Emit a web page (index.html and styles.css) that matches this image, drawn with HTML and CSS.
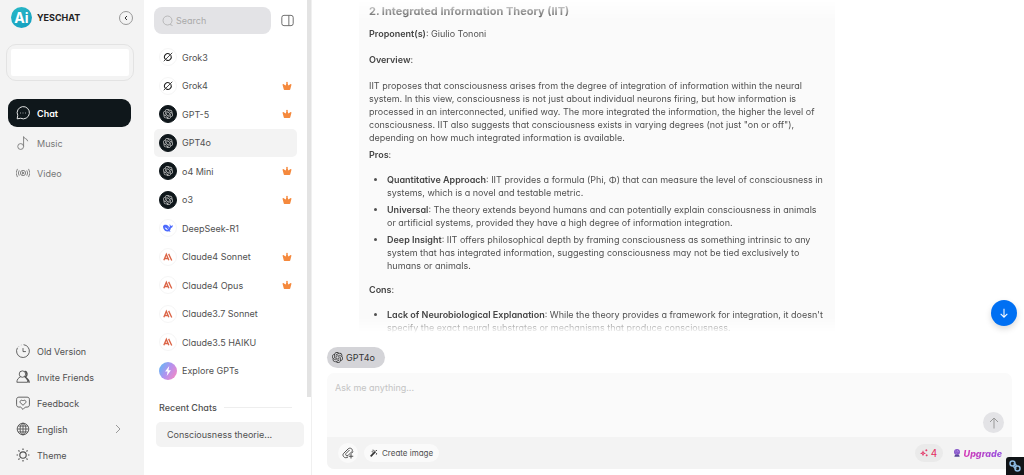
FILE: index.html
```html
<!DOCTYPE html>
<html lang="en">
<head>
  <meta charset="UTF-8" />
  <meta name="viewport" content="width=device-width, initial-scale=1.0"/>
  <title>YesChat</title>
  <link rel="stylesheet" href="styles.css">
</head>
<body>

  <!-- shared icons -->
  <svg class="sprite" aria-hidden="true">
    <symbol id="openai" viewBox="0 0 24 24"><path fill="currentColor" d="M22.2819 9.8211a5.9847 5.9847 0 0 0-.5157-4.9108 6.0462 6.0462 0 0 0-6.5098-2.9A6.0651 6.0651 0 0 0 4.9807 4.1818a5.9847 5.9847 0 0 0-3.9977 2.9 6.0462 6.0462 0 0 0 .7427 7.0966 5.98 5.98 0 0 0 .511 4.9107 6.051 6.051 0 0 0 6.5146 2.9001A5.9847 5.9847 0 0 0 13.2599 24a6.0557 6.0557 0 0 0 5.7718-4.2058 5.9894 5.9894 0 0 0 3.9977-2.9001 6.0557 6.0557 0 0 0-.7475-7.0729zm-9.022 12.6081a4.4755 4.4755 0 0 1-2.8764-1.0408l.1419-.0804 4.7783-2.7582a.7948.7948 0 0 0 .3927-.6813v-6.7369l2.02 1.1686a.071.071 0 0 1 .038.052v5.5826a4.504 4.504 0 0 1-4.4945 4.4944zm-9.6607-4.1254a4.4708 4.4708 0 0 1-.5346-3.0137l.142.0852 4.783 2.7582a.7712.7712 0 0 0 .7806 0l5.8428-3.3685v2.3324a.0804.0804 0 0 1-.0332.0615L9.74 19.9502a4.4992 4.4992 0 0 1-6.1408-1.6464zM2.3408 7.8956a4.485 4.485 0 0 1 2.3655-1.9728V11.6a.7664.7664 0 0 0 .3879.6765l5.8144 3.3543-2.0201 1.1685a.0757.0757 0 0 1-.071 0l-4.8303-2.7865A4.504 4.504 0 0 1 2.3408 7.872zm16.5963 3.8558L13.1038 8.364 15.1192 7.2a.0757.0757 0 0 1 .071 0l4.8303 2.7913a4.4944 4.4944 0 0 1-.6765 8.1042v-5.6772a.79.79 0 0 0-.407-.667zm2.0107-3.0231l-.142-.0852-4.7735-2.7818a.7759.7759 0 0 0-.7854 0L9.409 9.2297V6.8974a.0662.0662 0 0 1 .0284-.0615l4.8303-2.7866a4.4992 4.4992 0 0 1 6.6802 4.66zM8.3065 12.863l-2.02-1.1638a.0804.0804 0 0 1-.038-.0567V6.0742a4.4992 4.4992 0 0 1 7.3757-3.4537l-.142.0805L8.704 5.459a.7948.7948 0 0 0-.3927.6813zm1.0976-2.3654l2.602-1.4998 2.6069 1.4998v2.9994l-2.5974 1.4997-2.6067-1.4997Z"/></symbol>
    <symbol id="grok" viewBox="0 0 24 24"><g fill="none" stroke="#222" stroke-width="2.5" stroke-linecap="round"><path d="M16.5 5.5A8 8 0 0 0 5.5 17"/><path d="M19 8.500A8 8 0 0 1 8 19.200"/><path d="M2.500 21.500 21.500 2.500" stroke-width="2"/></g></symbol>
    <symbol id="claude" viewBox="0 0 24 24"><g fill="none" stroke="#dc6547" stroke-width="3.200"><path d="M2 20 8 5.500 14 20M4.500 15.500h7M13.500 4.500l7.500 16"/></g></symbol>
    <symbol id="deepseek" viewBox="0 0 24 24"><path fill="#4d6bfe" d="M0 8C.5 4 6 3 9.500 5c3 1.200 4.500 4.500 6.500 5.500 1-1.500.3-5-.5-7.500 1.500.2 2.500 1.500 3.300 4 1.500 0 3.500-1 4.700-2.500.5 4.500-2.500 7-4.500 7.500-.3 2.500-1.500 4.500-3 6l2.500 2c-2.500.8-4.500.5-5.500-.3C6 22.200 0 16 0 8z"/><path fill="#fff" d="M4.500 11c3.500 0 5.500 2.500 7.500 5.500-3.500 0-7-2-7.500-5.500zM11.500 10.500c1.500 0 2.500 1 2.800 2.500-1.500 0-2.600-1-2.800-2.500z"/></symbol>
    <symbol id="crown" viewBox="0 0 24 24"><path fill="#f5893d" d="M12 1.500c1.800 0 2.600 2 1.400 3.400L15 11l5-3.500c1-1 3-.2 2.700 1.200L20 19c-.2 1.500-.8 2.500-2 2.500H6c-1.200 0-1.800-1-2-2.500L1.300 8.700C1 7.300 3 6.500 4 7.500L9 11l1.600-6.100C9.400 3.500 10.200 1.500 12 1.500z"/></symbol>
  </svg>

  <div class="app">
    <aside class="sidebar">
      <div class="brand">
        <span class="logo">Ai</span>
        <span class="brand-name">YESCHAT</span>
        <button class="collapse" aria-label="Collapse menu">
          <svg class="icon-tiny" viewBox="0 0 10 10"><path d="M6 3 4 5 6 7" fill="none" stroke="#333"/></svg>
        </button>
      </div>

      <div class="account"><div class="account-inner"></div></div>

      <nav class="main-nav">
        <a href="#" class="nav-item active">
          <svg class="icon" viewBox="0 0 24 24"><path d="M2 22l1-6a10.500 10.500 0 1 1 5 5z"/><path d="M7 12h1M11.500 12h1M16 12h1" stroke-width="2"/></svg>
          Chat
        </a>
        <a href="#" class="nav-item">
          <svg class="icon" viewBox="0 0 24 24"><circle cx="8" cy="18" r="5"/><path d="M13 18V1c0 4 7 3 7 8"/></svg>
          Music
        </a>
        <a href="#" class="nav-item">
          <svg class="icon" viewBox="0 0 24 24"><circle cx="12" cy="12" r="4.500"/><path d="M11 10v4l3-2zM5.500 7.500a8 8 0 0 0 0 9M18.500 7.500a8 8 0 0 1 0 9M2.500 5a12 12 0 0 0 0 14M21.500 5a12 12 0 0 1 0 14"/></svg>
          Video
        </a>
      </nav>

      <nav class="sub-nav">
        <a href="#" class="nav-item">
          <svg class="icon" viewBox="0 0 24 24"><path d="M13 1.200A11 11 0 1 1 2.500 6.500"/><path d="M12 7v6h5M5 4l.5-.5M8.500 2l.5-.2"/></svg>
          Old Version
        </a>
        <a href="#" class="nav-item">
          <svg class="icon" viewBox="0 0 24 24"><circle cx="11" cy="7" r="5.500"/><path d="M1.500 21c0-5 3-8 6-9M15 12c3 1 5 4 5 9H1.500"/><path d="M15 2c5 1 5 8 1 10l5 5c1 1 1.500 3 1.500 5" stroke-width="2.500"/></svg>
          Invite Friends
        </a>
        <a href="#" class="nav-item">
          <svg class="icon" viewBox="0 0 24 24"><path d="M5 2h14c2.500 0 4 1.500 4 4v9c0 2.500-1.500 4-4 4h-3l-4 4-4-4H5c-2.500 0-4-1.500-4-4V6c0-2.500 1.500-4 4-4z"/><path d="M12 16 7.500 11.500c-2-3 2-6 4.500-3 2.500-3 6.500 0 4.500 3z"/></svg>
          Feedback
        </a>
        <a href="#" class="nav-item">
          <svg class="icon" viewBox="0 0 24 24"><circle cx="12" cy="12" r="10"/><ellipse cx="12" cy="12" rx="5" ry="10"/><path d="M2 12h20M12 2v20M3.500 7h17M3.500 17h17"/></svg>
          English
          <svg class="chevron" viewBox="0 0 10 10"><path d="M3 1 7 5 3 9" fill="none" stroke="#999"/></svg>
        </a>
        <a href="#" class="nav-item">
          <svg class="icon" viewBox="0 0 24 24"><circle cx="12" cy="12" r="5.500" stroke-width="2"/><path d="M12 1v2.500M12 20.500V23M1 12h2.500M20.500 12H23M4.200 4.200 6 6M18 18l1.800 1.800M19.800 4.200 18 6M6 18l-1.800 1.800" stroke-width="2"/></svg>
          Theme
        </a>
      </nav>
    </aside>

    <section class="models">
      <div class="model-scroll">
        <div class="search-row">
          <label class="search">
            <svg class="icon-small" viewBox="0 0 24 24"><circle cx="11" cy="11" r="9"/><path d="M16 19l5 2"/></svg>
            <input type="search" placeholder="Search" aria-label="Search">
          </label>
          <button class="panel-btn" aria-label="Toggle panel">
            <svg class="icon-panel" viewBox="0 0 24 24"><rect x="1.500" y="2.500" width="21" height="19" rx="4"/><path d="M14.500 3v18"/></svg>
          </button>
        </div>

        <div class="model-list">
          <a href="#" class="model"><span class="avatar"><svg><use href="#grok"/></svg></span>Grok3</a>
          <a href="#" class="model"><span class="avatar"><svg><use href="#grok"/></svg></span>Grok4<svg class="crown"><use href="#crown"/></svg></a>
          <a href="#" class="model"><span class="avatar dark"><svg><use href="#openai"/></svg></span>GPT-5<svg class="crown"><use href="#crown"/></svg></a>
          <a href="#" class="model selected"><span class="avatar dark"><svg><use href="#openai"/></svg></span>GPT4o</a>
          <a href="#" class="model"><span class="avatar dark"><svg><use href="#openai"/></svg></span>o4 Mini<svg class="crown"><use href="#crown"/></svg></a>
          <a href="#" class="model"><span class="avatar dark"><svg><use href="#openai"/></svg></span>o3<svg class="crown"><use href="#crown"/></svg></a>
          <a href="#" class="model"><span class="avatar"><svg><use href="#deepseek"/></svg></span>DeepSeek-R1</a>
          <a href="#" class="model"><span class="avatar"><svg><use href="#claude"/></svg></span>Claude4 Sonnet<svg class="crown"><use href="#crown"/></svg></a>
          <a href="#" class="model"><span class="avatar"><svg><use href="#claude"/></svg></span>Claude4 Opus<svg class="crown"><use href="#crown"/></svg></a>
          <a href="#" class="model"><span class="avatar"><svg><use href="#claude"/></svg></span>Claude3.7 Sonnet</a>
          <a href="#" class="model"><span class="avatar"><svg><use href="#claude"/></svg></span>Claude3.5 HAIKU</a>
          <a href="#" class="model"><span class="avatar explore"><svg viewBox="0 0 24 24"><path fill="#fff" d="M15 0 5 13h6L9 24l10-14h-6z"/></svg></span>Explore GPTs</a>
        </div>
      </div>

      <div class="recent">
        <h2>Recent Chats</h2>
        <a href="#" class="recent-item">Consciousness theorie...</a>
      </div>
    </section>

    <main class="chat">
      <div class="messages">
        <article class="message">
          <h3>2. Integrated Information Theory (IIT)</h3>
          <p><strong>Proponent(s)</strong>: Giulio Tononi</p>
          <p><strong>Overview</strong>:</p>
          <p class="overview">IIT proposes that consciousness arises from the degree of integration of information within the neural system. In this view, consciousness is not just about individual neurons firing, but how information is processed in an interconnected, unified way. The more integrated the information, the higher the level of consciousness. IIT also suggests that consciousness exists in varying degrees (not just "on or off"), depending on how much integrated information is available.</p>
          <p class="list-title"><strong>Pros</strong>:</p>
          <ul>
            <li><strong>Quantitative Approach</strong>: IIT provides a formula (Phi, Φ) that can measure the level of consciousness in systems, which is a novel and testable metric.</li>
            <li><strong>Universal</strong>: The theory extends beyond humans and can potentially explain consciousness in animals or artificial systems, provided they have a high degree of information integration.</li>
            <li><strong>Deep Insight</strong>: IIT offers philosophical depth by framing consciousness as something intrinsic to any system that has integrated information, suggesting consciousness may not be tied exclusively to humans or animals.</li>
          </ul>
          <p class="list-title"><strong>Cons</strong>:</p>
          <ul>
            <li><strong>Lack of Neurobiological Explanation</strong>: While the theory provides a framework for integration, it doesn't specify the exact neural substrates or mechanisms that produce consciousness.</li>
          </ul>
        </article>
      </div>

      <button class="scroll-down" aria-label="Scroll to bottom">
        <svg viewBox="0 0 24 24"><path d="M12 2v20M4 14l8 8 8-8" stroke-width="2.500"/></svg>
      </button>

      <div class="composer">
        <button class="model-chip"><svg><use href="#openai"/></svg>GPT4o</button>
        <div class="input-box">
          <div class="input-area">
            <textarea placeholder="Ask me anything..." aria-label="Message"></textarea>
            <button class="send" aria-label="Send">
              <svg class="icon-small" viewBox="0 0 24 24"><path d="M12 23V2M4 10l8-8 8 8" stroke-width="2"/></svg>
            </button>
          </div>
          <div class="toolbar">
            <button class="attach" aria-label="Attach file">
              <svg class="icon-small" viewBox="0 0 24 24"><path d="M12 20c-3 2-7 2-9-1s-1-5 1-7l8-8c4-4 11 0 8 5l-8 8c-3 2-6-1-4-4l7-7M4 12l6-6M22 9l-3 4M18 14v9M13.500 18.500h9" stroke-width="2"/></svg>
            </button>
            <button class="create">
              <svg viewBox="0 0 24 24"><path d="M2 22 16 8" stroke="#333" stroke-width="5"/><path d="M17 7l4-4M9 2l1 5M5 8l4 1M20 12l-1 5M14 3l1 2" stroke="#333" stroke-width="2.500"/></svg>
              Create image
            </button>
            <button class="credits">
              <svg viewBox="0 0 24 24"><path d="M9 4l2.500 6.500L18 13l-6.500 2.500L9 22l-2.500-6.500L0 13l6.500-2.500z" fill="#e22f62"/><circle cx="9" cy="13" r="1.500" fill="#eee"/><path d="M19 1v6M16 4h6M20 16v6M17 19h6" stroke="#e22f62" stroke-width="2.500"/></svg>
              4
            </button>
            <a href="#" class="upgrade">
              <svg viewBox="0 0 24 24"><circle cx="12" cy="9" r="9" fill="#8657c9"/><path d="M6 17h12l2 6H4z" fill="#594795"/><path d="M7 5l2 3M13 3v5M17 7l-2 3M8 12l3 1" stroke="#c8a3f1" stroke-width="2"/></svg>
              <span>Upgrade</span>
            </a>
          </div>
        </div>
      </div>
    </main>
  </div>

  <button class="link-badge" aria-label="Copy link">
    <svg viewBox="0 0 24 24"><g fill="none" stroke="#8bb8e0" stroke-width="3"><circle cx="7" cy="7" r="5"/><circle cx="17" cy="17" r="5"/><path d="M9 8c4-1 6 2 5 4M15 16c-4 1-6-2-5-4"/></g></svg>
  </button>

</body>
</html>
```
FILE: styles.css
```css
* {
  box-sizing: border-box;
}

body {
  margin: 0;
  font-family: 'Inter', 'Liberation Sans', sans-serif;
  font-feature-settings: "cv11";
  font-size: 9px;
  line-height: 13px;
  color: #505050;
  background-color: #fff;
}

button, input, textarea {
  font: inherit;
  font-feature-settings: inherit;
  color: inherit;
  border: none;
  padding: 0;
  background: none;
}

button {
  cursor: pointer;
  display: flex;
  align-items: center;
  justify-content: center;
}

a {
  color: inherit;
  text-decoration: none;
}

svg {
  flex-shrink: 0;
}

.sprite {
  display: none;
}

.app {
  display: flex;
  height: 100vh;
}

.icon, .icon-small, .icon-panel {
  width: 14px;
  height: 14px;
  fill: none;
  stroke: currentColor;
  stroke-width: 1.5;
}

.icon-small {
  width: 12px;
  height: 12px;
}

.icon-panel {
  width: 13px;
  height: 13px;
}

/* left sidebar */
.sidebar {
  width: 144px;
  flex-shrink: 0;
  display: flex;
  flex-direction: column;
  background-color: #f3f3f3;
  padding: 7px 6px;
}

.brand {
  display: flex;
  align-items: center;
  gap: 5px;
  padding: 0 5px;
}

.logo {
  width: 21px;
  height: 21px;
  border-radius: 50%;
  background: linear-gradient(150deg, #2ab9c6, #129dc0);
  color: #fff;
  font-size: 14px;
  font-weight: bold;
  line-height: 21px;
  text-align: center;
}

.brand-name {
  color: #222;
  font-weight: bold;
}

.collapse {
  width: 14px;
  height: 14px;
  margin-left: auto;
  border: 1px solid #999;
  border-radius: 50%;
}

.icon-tiny {
  width: 10px;
  height: 10px;
}

.account {
  height: 37px;
  margin-top: 16px;
  padding: 4px;
  border: 1px solid #e3e3e3;
  border-radius: 10px;
  margin-right: 4px;
}

.account-inner {
  height: 100%;
  background-color: #fff;
  border-radius: 2px;
}

.nav-item {
  display: flex;
  align-items: center;
  gap: 7px;
  height: 28px;
  padding: 0 8px;
  border-radius: 9px;
}

.main-nav {
  display: flex;
  flex-direction: column;
  gap: 2px;
  margin: 18px 7px 0 2px;
  color: #777;
}

.main-nav .active {
  background-color: #0f171b;
  color: #fff;
  font-weight: 600;
}

.sub-nav {
  margin: auto 7px 0 2px;
}

.sub-nav .nav-item {
  height: 26px;
}

.chevron {
  width: 10px;
  height: 10px;
  margin-left: auto;
}

/* model list */
.models {
  width: 168px;
  flex-shrink: 0;
  display: flex;
  flex-direction: column;
  border-right: 1px solid #f0f0f0;
}

.model-scroll {
  flex: 1;
  display: flex;
  flex-direction: column;
  padding: 7px 10px 12px 10px;
  border-right: 4px solid #e3e3e3;
}

.search-row {
  display: flex;
  align-items: center;
  gap: 10px;
  padding-right: 3px;
}

.search {
  flex: 1;
  min-width: 0;
  display: flex;
  align-items: center;
  gap: 2px;
  height: 27px;
  padding: 0 8px;
  border-radius: 8px;
  background-color: #e3e3e6;
  color: #aaa;
}

.search input {
  width: 100%;
  min-width: 0;
  outline: none;
}

.search input::placeholder {
  color: #aaa;
}

.panel-btn {
  width: 13px;
}

.model-list {
  flex: 1;
  display: flex;
  flex-direction: column;
  margin-top: 9px;
}

.model {
  flex: 1;
  display: flex;
  align-items: center;
  padding: 0 5px;
  border-radius: 5px;
}

.model.selected {
  background-color: #f3f3f3;
}

.avatar {
  width: 18px;
  height: 18px;
  margin-right: 5px;
  display: flex;
  align-items: center;
  justify-content: center;
  border: 1px solid #f6f6f6;
  border-radius: 50%;
}

.avatar svg {
  width: 10px;
  height: 10px;
}

.avatar.dark {
  background-color: #0f171b;
  border-color: #0f171b;
  color: #ccc;
}

.avatar.explore {
  border: none;
  background: linear-gradient(120deg, #55bdf5, #b591ef 50%, #ff87bb);
}

.crown {
  width: 10px;
  height: 10px;
  margin-left: auto;
}

.recent {
  padding: 4px 7px 28px 12px;
}

.recent h2 {
  display: flex;
  align-items: center;
  gap: 7px;
  margin: 0 12px 8px 3px;
  font-size: 9px;
  font-weight: 500;
}

.recent h2::after {
  content: "";
  flex: 1;
  height: 1px;
  background-color: #eee;
}

.recent-item {
  display: block;
  padding: 6px 11px;
  border-radius: 5px;
  background-color: #f3f3f3;
}

/* conversation */
.chat {
  flex: 1;
  min-width: 0;
  display: flex;
  flex-direction: column;
  position: relative;
}

.messages {
  flex: 1;
  min-height: 0;
  overflow: hidden;
  padding: 0 189px 0 47px;
  -webkit-mask-image: linear-gradient(transparent, #000 20px, #000 calc(100% - 16px), transparent);
  mask-image: linear-gradient(transparent, #000 20px, #000 calc(100% - 16px), transparent);
}

.message {
  padding: 5px 8px 20px 10px;
  background-color: #fafafa;
}

.message h3 {
  margin: 0 0 9px;
  font-size: 11px;
  line-height: 13px;
  font-weight: bold;
}

.message p {
  margin: 0 0 13px;
}

.message p.overview {
  margin-bottom: 4px;
}

.message p.list-title {
  margin-bottom: 12px;
}

.message strong {
  font-weight: 600;
  color: #444;
}

.message ul {
  margin: 0 0 11px;
  padding-left: 18px;
}

.message li + li {
  margin-top: 4px;
}

.scroll-down {
  position: absolute;
  right: 7px;
  top: 300px;
  width: 26px;
  height: 26px;
  border-radius: 50%;
  background-color: #0070f3;
  color: #fff;
  box-shadow: 0 3px 6px rgba(0, 0, 0, 0.15);
}

.scroll-down svg {
  width: 10px;
  height: 10px;
  fill: none;
  stroke: currentColor;
}

.composer {
  padding: 14px 12px 6px 15px;
}

.model-chip {
  gap: 3px;
  height: 21px;
  padding: 0 10px 0 5px;
  border-radius: 11px;
  background-color: #d4d4d8;
  color: #333;
}

.model-chip svg {
  width: 11px;
  height: 11px;
}

.input-box {
  margin-top: 5px;
  border-radius: 7px;
  overflow: hidden;
  background-color: #fafafa;
}

.input-area {
  display: flex;
  align-items: flex-end;
  padding: 8px 8px 4px 8px;
}

.input-area textarea {
  flex: 1;
  height: 52px;
  resize: none;
  outline: none;
}

.input-area textarea::placeholder {
  color: #c4c4c4;
}

.send {
  width: 21px;
  height: 21px;
  border-radius: 50%;
  background-color: #e3e3e6;
  color: #999;
}

.toolbar {
  display: flex;
  align-items: center;
  gap: 6px;
  height: 32px;
  padding: 0 10px 0 11px;
  background-color: #f3f3f3;
}

.attach {
  width: 20px;
  height: 20px;
  border-radius: 50%;
  background-color: #fafafa;
}

.create {
  gap: 4px;
  height: 18px;
  padding: 0 6px;
  border-radius: 9px;
  background-color: #fafafa;
  font-size: 8px;
}

.create svg,
.credits svg,
.upgrade svg {
  width: 8px;
  height: 8px;
}

.credits {
  gap: 3px;
  width: 28px;
  height: 18px;
  margin-left: auto;
  border-radius: 9px;
  background-color: #eaeaea;
  color: #e22f62;
  font-size: 10px;
}

.upgrade {
  display: flex;
  align-items: center;
  gap: 3px;
  padding-left: 4px;
  font-size: 9px;
  font-weight: 800;
  font-style: italic;
}

.upgrade span {
  background: linear-gradient(90deg, #d53bb5, #9450e0);
  -webkit-background-clip: text;
  background-clip: text;
  color: transparent;
}

.link-badge {
  position: fixed;
  right: 0;
  bottom: 0;
  width: 18px;
  height: 18px;
  border-radius: 3px 0 0 0;
  background-color: #111417;
}

.link-badge svg {
  width: 12px;
  height: 12px;
}
```
